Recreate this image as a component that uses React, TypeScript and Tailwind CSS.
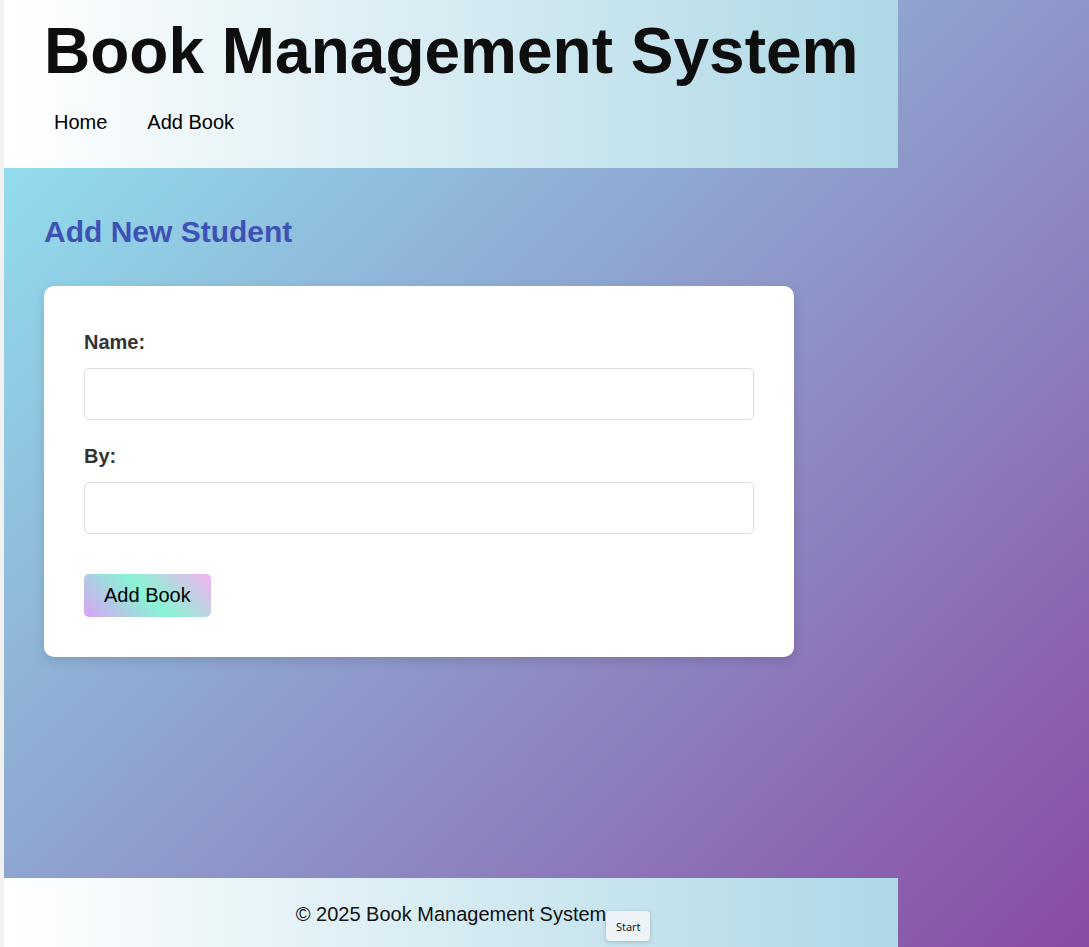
import React from 'react';

const App = () => {
  const fields = ["Name:", "By:"];

  return (
    <div className="flex min-h-screen w-full font-['Liberation_Sans',Arial,sans-serif]">
      <div className="w-[4px] shrink-0 bg-[#f1f1f1]"></div>

      <div className="flex-1 flex flex-col bg-[linear-gradient(135deg,#92eaf3_0%,#8a4ba3_100%)]">
        <header className="w-[894px] pt-[15px] pb-[34px] px-10 bg-[linear-gradient(to_right,#ffffff,#add8e6)]">
          <h1 className="whitespace-nowrap text-[64px] leading-[72px] font-bold text-[#0e0e0e]">
            Book Management System
          </h1>
          <nav className="mt-[24px] flex gap-5">
            <a className="px-[10px] text-[20px] leading-[23px] text-black">Home</a>
            <a className="px-[10px] text-[20px] leading-[23px] text-black">Add Book</a>
          </nav>
        </header>

        <main className="h-[710px] px-10 pt-[47px]">
          <h2 className="text-[30px] leading-[34px] font-bold text-[#3f51b5]">
            Add New Student
          </h2>

          <div className="mt-[37px] w-[750px] rounded-[10px] bg-white px-10 pt-[45px] pb-10 shadow-[0_4px_12px_rgba(0,0,0,0.12)]">
            {fields.map((field, index) => (
              <div key={index} className={index > 0 ? "mt-[25px]" : ""}>
                <label className="block text-[20px] leading-[23px] font-bold text-[#333]">
                  {field}
                </label>
                <input
                  type="text"
                  className="mt-[14px] block h-[52px] w-full rounded-[5px] border border-[#dddddd] bg-white px-3 outline-none"
                />
              </div>
            ))}

            <button className="mt-[40px] rounded-[5px] px-5 py-[10px] text-[20px] leading-[23px] text-black bg-[linear-gradient(45deg,#d8a2f6_0%,#88f4d3_50%,#f3b2f0_100%)]">
              Add Book
            </button>
          </div>
        </main>

        <footer className="w-[894px] h-[69px] pt-[25px] text-center bg-[linear-gradient(to_right,#ffffff,#add8e6)]">
          <span className="relative inline-block text-[20px] leading-[23px] text-[#111]">
            © 2025 Book Management System
            <span className="absolute left-full top-[8px] w-[44px] h-[30px] rounded-[4px] bg-[#eef3f7] shadow-[0_1px_4px_rgba(0,0,0,0.2)] flex items-center justify-center font-['Noto_Sans',sans-serif] text-[11px] text-[#222]">
              Start
            </span>
          </span>
        </footer>
      </div>
    </div>
  );
};

export default App;
